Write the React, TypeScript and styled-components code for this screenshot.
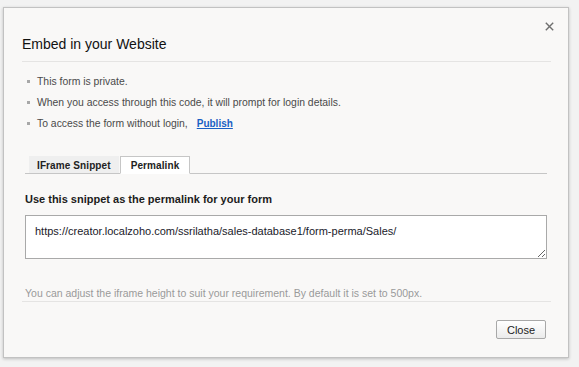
import React from "react";
import styled, { createGlobalStyle } from "styled-components";

const Global = createGlobalStyle`
  html, body { margin: 0; padding: 0; }
  body {
    background: #f2f2f2;
    font-family: "Liberation Sans", Arial, Helvetica, sans-serif;
    width: 579px;
    height: 367px;
    overflow: hidden;
  }
`;

const Page = styled.div`
  padding: 7px 0 0 3px;
`;

const Frame = styled.div`
  width: 566px;
  height: 351px;
  box-sizing: border-box;
  background: #f9f8f7;
  border: 1px solid #c2c2c2;
  box-shadow: 0 1px 3px rgba(0, 0, 0, 0.22);
  display: flex;
  flex-direction: column;
  padding: 0 17px 0 18px;
`;

const TopBar = styled.div`
  display: flex;
  justify-content: flex-end;
  padding: 12px 0 0;
  height: 14px;
  margin-right: -4px;
`;

const CloseX = styled.button`
  width: 12px;
  height: 12px;
  border: 0;
  padding: 0;
  background: transparent;
  display: flex;
  align-items: center;
  justify-content: center;
  cursor: pointer;
`;

const Title = styled.h1`
  margin: 0;
  font-size: 14px;
  font-weight: normal;
  line-height: 18px;
  color: #111;
  padding: 1px 0 8px 0;
  border-bottom: 1px solid #e5e4e3;
`;

const List = styled.ul`
  list-style: none;
  margin: 9px 0 0;
  padding: 0;
`;

const Item = styled.li`
  display: flex;
  align-items: center;
  height: 21px;
  font-size: 10.4px;
  color: #4a4a4a;
  &::before {
    content: "";
    width: 3px;
    height: 3px;
    background: #a8a8a8;
    margin: 0 7px 0 5px;
    flex: none;
  }
`;

const PublishLink = styled.a`
  color: #1a5fc4;
  font-weight: bold;
  font-size: 10px;
  text-decoration: underline;
  margin-left: 9px;
  cursor: pointer;
`;

const Section = styled.div`
  padding: 0 4px 0 3px;
`;

const Tabs = styled.div`
  display: flex;
  gap: 1px;
  margin-top: 22px;
  padding-left: 4px;
  border-bottom: 1px solid #c6c6c6;
  height: 17px;
`;

const Tab = styled.div<{ $active?: boolean }>`
  box-sizing: border-box;
  height: ${(p) => (p.$active ? "18px" : "17px")};
  margin-bottom: ${(p) => (p.$active ? "-1px" : "0")};
  display: flex;
  align-items: center;
  padding: 0 ${(p) => (p.$active ? "10px" : "7px")};
  font-size: 10px;
  font-weight: bold;
  letter-spacing: 0.1px;
  color: #222;
  background: ${(p) => (p.$active ? "#ffffff" : "#efefef")};
  border: 1px solid ${(p) => (p.$active ? "#c6c6c6" : "transparent")};
  border-bottom: ${(p) => (p.$active ? "1px solid #ffffff" : "0")};
`;

const Heading = styled.div`
  margin-top: 17px;
  font-size: 11px;
  font-weight: bold;
  line-height: 16px;
  color: #1c1c1c;
`;

const UrlBox = styled.textarea`
  display: block;
  box-sizing: border-box;
  margin-top: 8px;
  width: 100%;
  height: 44px;
  border: 1px solid #a9a9a9;
  background: #fff;
  padding: 8px 9px;
  font-family: "Liberation Sans", Arial, Helvetica, sans-serif;
  font-size: 11px;
  line-height: 14px;
  color: #1a1a2a;
  resize: both;
  outline: none;
`;

const Note = styled.div`
  margin-top: 26px;
  padding: 0 0 0 3px;
  font-size: 10.5px;
  line-height: 16px;
  color: #9a9a9a;
  border-bottom: 1px solid #e5e4e3;
`;

const Footer = styled.div`
  display: flex;
  justify-content: flex-end;
  padding: 18px 5px 0 0;
`;

const Button = styled.button`
  box-sizing: border-box;
  width: 50px;
  height: 19px;
  padding: 0;
  font-family: "Liberation Sans", Arial, Helvetica, sans-serif;
  font-size: 11px;
  color: #222;
  background: linear-gradient(#ffffff, #ebebeb);
  border: 1px solid #a8a8a8;
  border-radius: 2px;
  cursor: pointer;
`;

export default function App() {
  return (
    <>
      <Global />
      <Page>
        <Frame>
          <TopBar>
            <CloseX aria-label="Close">
              <svg width="9" height="9" viewBox="0 0 9 9">
                <path d="M0.8 0.8 L8.2 8.2 M8.2 0.8 L0.8 8.2" stroke="#6f6f6f" strokeWidth="1.4" />
              </svg>
            </CloseX>
          </TopBar>
          <Title>Embed in your Website</Title>
          <List>
            <Item>This form is private.</Item>
            <Item>When you access through this code, it will prompt for login details.</Item>
            <Item>
              To access the form without login,<PublishLink>Publish</PublishLink>
            </Item>
          </List>
          <Section>
            <Tabs>
              <Tab>IFrame Snippet</Tab>
              <Tab $active>Permalink</Tab>
            </Tabs>
            <Heading>Use this snippet as the permalink for your form</Heading>
            <UrlBox
              readOnly
              defaultValue="https://creator.localzoho.com/ssrilatha/sales-database1/form-perma/Sales/"
            />
          </Section>
          <Note>You can adjust the iframe height to suit your requirement. By default it is set to 500px.</Note>
          <Footer>
            <Button>Close</Button>
          </Footer>
        </Frame>
      </Page>
    </>
  );
}
